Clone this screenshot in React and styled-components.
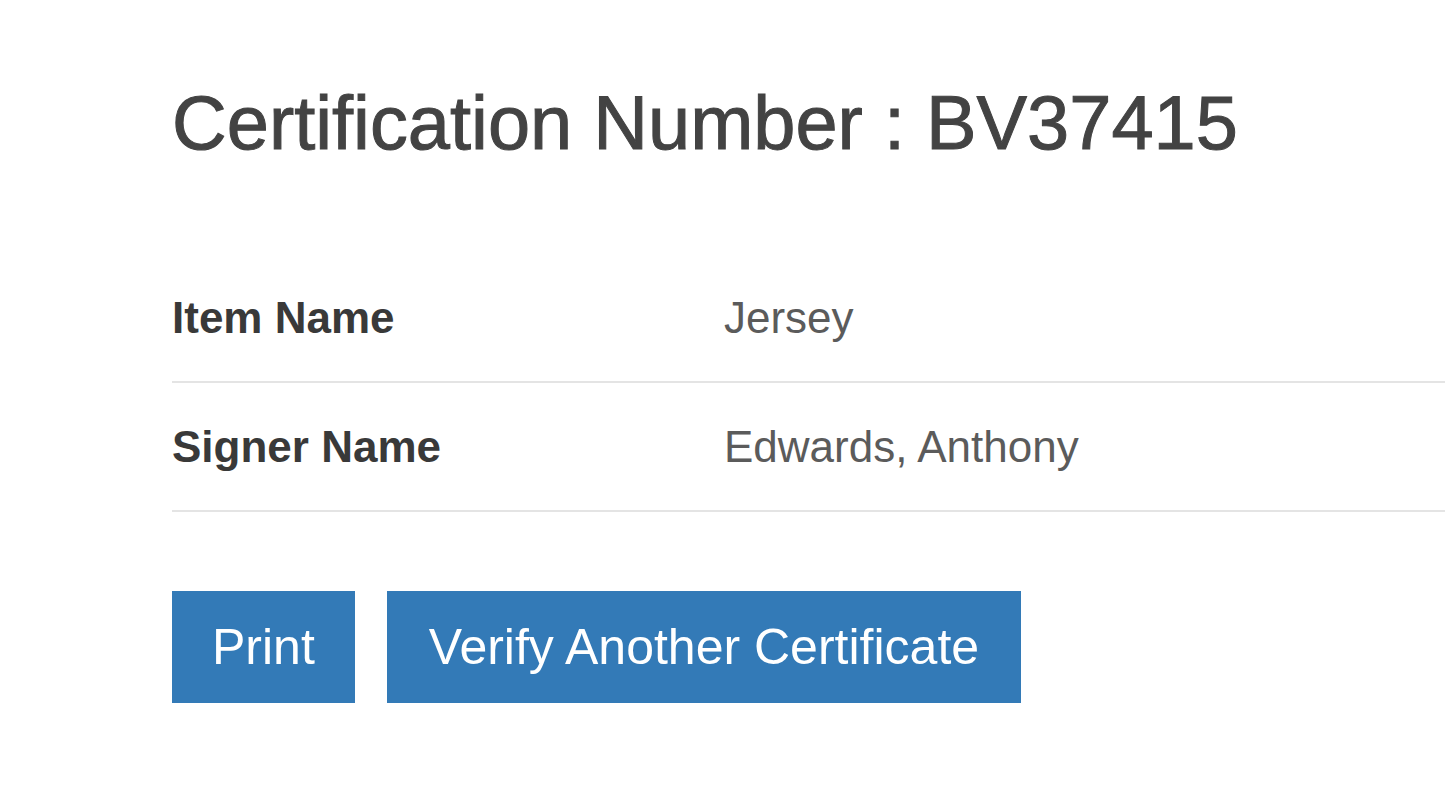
import styled, { createGlobalStyle } from "styled-components";

const GlobalStyle = createGlobalStyle`
  html, body {
    margin: 0;
    padding: 0;
    background: #ffffff;
  }
  body {
    font-family: "Liberation Sans", Arial, sans-serif;
    overflow: hidden;
  }
`;

const Page = styled.div`
  width: 1445px;
  height: 808px;
  box-sizing: border-box;
  padding: 81px 0 0 172px;
  overflow: hidden;
`;

const Title = styled.h1`
  margin: 0 0 89px;
  font-size: 75.8px;
  line-height: 84px;
  font-weight: 400;
  color: #434343;
  -webkit-text-stroke: 1px #434343;
  white-space: nowrap;
`;

const Table = styled.div`
  display: flex;
  flex-direction: column;
`;

const Row = styled.div`
  display: grid;
  grid-template-columns: 552px 1fr;
  align-items: center;
  height: 129px;
  box-sizing: border-box;
  border-bottom: 2px solid #e4e4e4;
  font-size: 44px;
`;

const Label = styled.div`
  font-weight: 700;
  color: #393939;
`;

const Value = styled.div`
  color: #5b5b5b;
`;

const Actions = styled.div`
  display: flex;
  gap: 32px;
  margin-top: 79px;
`;

const Button = styled.button`
  height: 112px;
  padding: 0 ${(p) => (p.$wide ? 42 : 40)}px;
  border: none;
  border-radius: 0;
  background: #337ab7;
  color: #ffffff;
  font-family: "Liberation Sans", Arial, sans-serif;
  font-size: 50px;
  cursor: pointer;
`;

const rows = [
  { label: "Item Name", value: "Jersey" },
  { label: "Signer Name", value: "Edwards, Anthony" },
];

export default function App() {
  return (
    <>
      <GlobalStyle />
      <Page>
        <Title>Certification Number : BV37415</Title>
        <Table>
          {rows.map((r) => (
            <Row key={r.label}>
              <Label>{r.label}</Label>
              <Value>{r.value}</Value>
            </Row>
          ))}
        </Table>
        <Actions>
          <Button>Print</Button>
          <Button $wide>Verify Another Certificate</Button>
        </Actions>
      </Page>
    </>
  );
}
